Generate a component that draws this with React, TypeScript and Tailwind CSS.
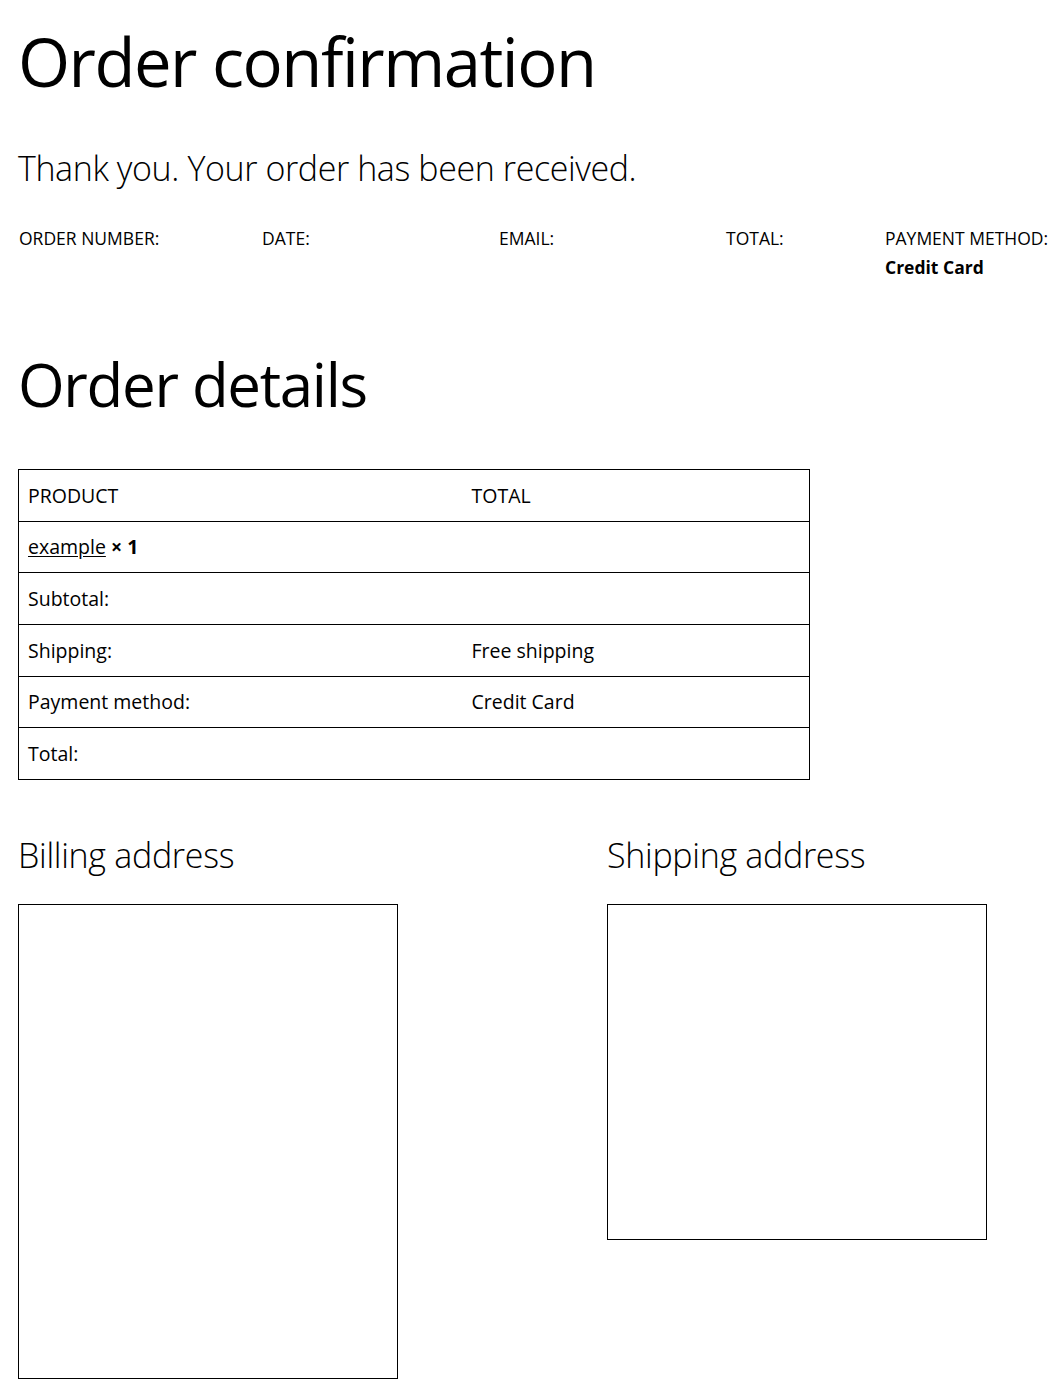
export default function App() {
  const overview = [
    { label: 'ORDER NUMBER:', value: '', w: 'w-[243px]' },
    { label: 'DATE:', value: '', w: 'w-[237px]' },
    { label: 'EMAIL:', value: '', w: 'w-[227px]' },
    { label: 'TOTAL:', value: '', w: 'w-[159px]' },
    { label: 'PAYMENT METHOD:', value: 'Credit Card', w: '' },
  ]

  const rows = [
    { label: 'Subtotal:', value: '' },
    { label: 'Shipping:', value: 'Free shipping' },
    { label: 'Payment method:', value: 'Credit Card' },
    { label: 'Total:', value: '' },
  ]

  return (
    <div className="min-h-[1390px] bg-white text-black pl-[18px] pt-[18px] font-['Open_Sans',sans-serif]">
      <h1 className="text-[67px] leading-[86px] tracking-[-1.5px]">Order confirmation</h1>

      <p className="mt-[42px] text-[34px] leading-[44px] font-light tracking-[-0.4px]">
        Thank you. Your order has been received.
      </p>

      <ul className="mt-[34px] ml-px flex text-[17.5px] leading-[29px]">
        {overview.map((o) => (
          <li key={o.label} className={o.w}>
            <div>{o.label}</div>
            {o.value && <div className="font-bold">{o.value}</div>}
          </li>
        ))}
      </ul>

      <h2 className="mt-[62px] text-[60px] leading-[80px] tracking-[-1.3px]">Order details</h2>

      <table className="mt-[45px] w-[792px] border-collapse text-[19.5px]">
        <thead>
          <tr className="h-[51.7px]">
            <th className="border-y border-l border-black px-[9px] text-left font-normal w-[453px]">PRODUCT</th>
            <th className="border-y border-r border-black px-[0px] text-left font-normal">TOTAL</th>
          </tr>
        </thead>
        <tbody>
          <tr className="h-[51.7px]">
            <td className="border border-black px-[9px]" colSpan={2}>
              <a className="underline underline-offset-2">example</a>{' '}
              <strong className="font-bold">× 1</strong>
            </td>
          </tr>
          {rows.map((r) => (
            <tr key={r.label} className="h-[51.7px]">
              <td className="border-y border-l border-black px-[9px]">{r.label}</td>
              <td className="border-y border-r border-black px-[0px]">{r.value}</td>
            </tr>
          ))}
        </tbody>
      </table>

      <div className="mt-[52px] flex">
        <section className="w-[589px]">
          <h2 className="text-[34px] leading-[46px] font-light tracking-[-0.3px]">Billing address</h2>
          <address className="mt-[26px] block w-[380px] h-[475px] border border-black not-italic"></address>
        </section>
        <section>
          <h2 className="text-[34px] leading-[46px] font-light tracking-[-0.3px]">Shipping address</h2>
          <address className="mt-[26px] block w-[380px] h-[336px] border border-black not-italic"></address>
        </section>
      </div>
    </div>
  )
}
